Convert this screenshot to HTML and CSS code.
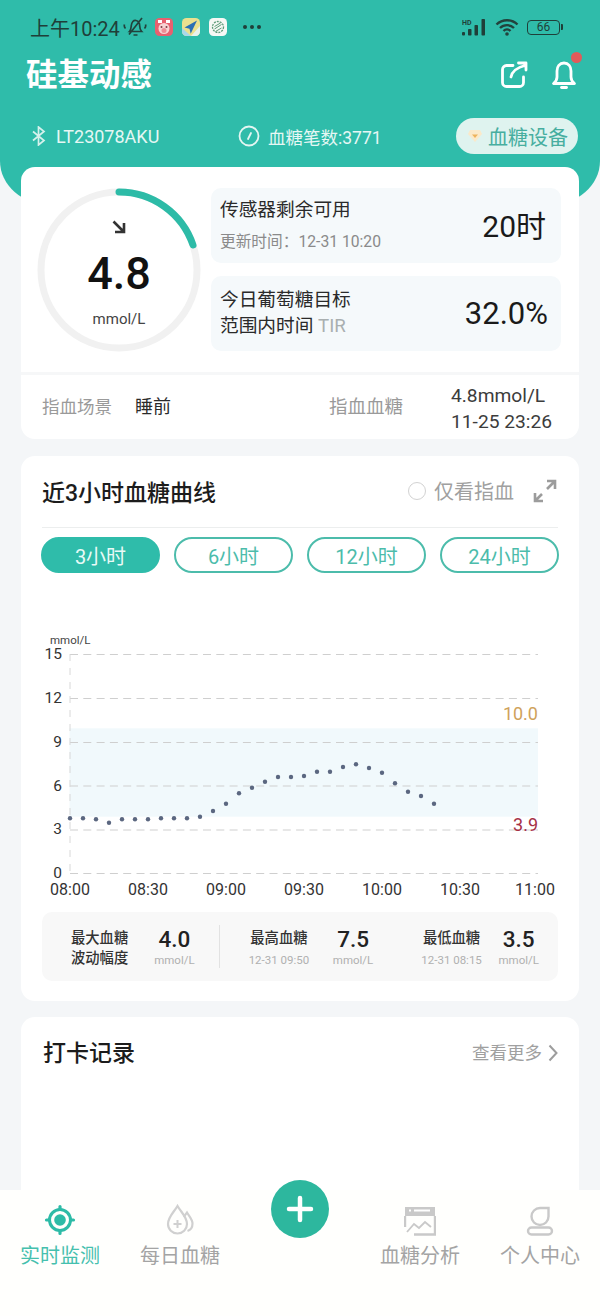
FILE: index.html
```html
<!DOCTYPE html>
<html lang="zh">
<head>
<meta charset="utf-8">
<title>硅基动感</title>
<link rel="stylesheet" href="styles.css">
</head>
<body>
<div class="app">
  <header class="hero">
    <div class="status">
      <div class="status-left">
        <span class="clock">上午10:24</span>
        <svg class="ic-mute" viewBox="0 0 24 22" fill="none" stroke="#22423c" stroke-width="1.700"><path d="M6.500 15.500c1.500-1.500 1.500-3.500 1.800-6C8.700 6 10.500 4 13 4.500c2.800.5 3.700 2.800 3.700 5.500s.6 4 2 5.500H6.500zM10.500 19h4M6 18.500L19 2M1.500 8.500c-.5 1.500 0 3 1 4M22.500 8.500c.5 1.500 0 3-1 4"/></svg>
        <svg class="app-ic" viewBox="0 0 18 18"><rect width="18" height="18" rx="4.500" fill="#e8606f"/><circle cx="9" cy="10.500" r="5.500" fill="#f7d3d3"/><circle cx="9" cy="12.500" r="2.500" fill="#ee8d96"/><path d="M3 2h4v3H3zM11 2h4v3h-4z" fill="#fff"/><circle cx="6.500" cy="9" r="1" fill="#7a3b44"/><circle cx="11.500" cy="9" r="1" fill="#7a3b44"/></svg>
        <svg class="app-ic" viewBox="0 0 18 18"><rect width="18" height="18" rx="4.500" fill="#ebe08f"/><path d="M0 10l9 8H4.500A4.500 4.500 0 0 1 0 13.500z" fill="#a8d8ea"/><path d="M18 8v5.500a4.500 4.500 0 0 1-4.500 4.500H9z" fill="#e8f2ee"/><path d="M15 2.500L2.500 9.500l5 1.200 1.200 5z" fill="#2b6fb4"/></svg>
        <svg class="app-ic" viewBox="0 0 18 18"><rect width="18" height="18" rx="4.500" fill="#f6f8f5"/><circle cx="9" cy="9" r="5.500" fill="none" stroke="#5c9a78" stroke-width="1.300" stroke-dasharray="2 1"/><path d="M5.500 11l7-4.500M5.500 8.500l6-3.500M6.500 13.500l6-3.500" stroke="#5c9a78" stroke-width="1"/></svg>
        <span class="dots"><i></i><i></i><i></i></span>
      </div>
      <div class="status-right">
        <svg class="ic-signal" viewBox="0 0 26 17"><text x="0" y="6" class="hd">HD</text><rect x="0" y="13" width="3" height="3.500" rx="1"/><rect x="6" y="10" width="3.500" height="6.500" rx=".8"/><rect x="12.500" y="6" width="3.500" height="10.500" rx=".8"/><rect x="19.500" y="0" width="3.500" height="16.500" rx=".8"/></svg>
        <svg class="ic-wifi" viewBox="0 0 24 18" fill="none" stroke="#22423c" stroke-width="2.400"><path d="M1.500 6.500a15 15 0 0 1 21 0M5 10a10 10 0 0 1 14 0M8.500 13a5 5 0 0 1 7 0"/><circle cx="12" cy="16" r="1.800" fill="#22423c" stroke="none"/></svg>
        <span class="battery"><span class="batt-body">66</span><span class="batt-tip"></span></span>
      </div>
    </div>
    <div class="brand-row">
      <h1 class="brand">硅基动感</h1>
      <div class="brand-actions">
        <svg class="ic-share" viewBox="0 0 28 28" fill="none" stroke="#fff" stroke-width="2.800" stroke-linecap="round" stroke-linejoin="round"><path d="M13 4.500H6.500a4 4 0 0 0-4 4v13a4 4 0 0 0 4 4h13a4 4 0 0 0 4-4V16"/><path d="M11 16c1-5 4-9 14-11.500M18.500 2H26v7"/></svg>
        <span class="bell-wrap">
          <svg class="ic-bell" viewBox="0 0 26 28" fill="none" stroke="#fff" stroke-width="2.800" stroke-linecap="round" stroke-linejoin="round"><path d="M13 2c-4.500 0-7 3.500-7 8v6c0 3-1.500 5-3.500 6.500h21C21.500 21 20 19 20 16v-6c0-4.500-2.500-8-7-8z"/><path d="M10.500 26.500h5"/></svg>
          <span class="bell-dot"></span>
        </span>
      </div>
    </div>
    <div class="info-row">
      <span class="info-item bt">
        <svg class="ic-bt" viewBox="0 0 14 20" fill="none" stroke="#d6f1ec" stroke-width="1.700"><path d="M1.500 5.500l11 9L7 19V1l5.500 4.500-11 9"/></svg>
        LT23078AKU
      </span>
      <span class="info-item count">
        <svg class="ic-clock" viewBox="0 0 22 22" fill="none" stroke="#e3f6f2" stroke-width="1.800"><circle cx="11" cy="11" r="9.500"/><path d="M10 14l3-6" stroke-linecap="round"/></svg>
        血糖笔数:3771
      </span>
      <span class="device-pill">
        <svg class="ic-gem" viewBox="0 0 14 12"><path d="M2 0h10l2 4-7 8-7-8z" fill="#fbe9c9"/><path d="M4 4.500h6L7 8z" fill="#eeb35c"/></svg>
        血糖设备
      </span>
    </div>
  </header>

  <main class="content">
    <section class="card summary">
      <div class="summary-top">
        <div class="gauge">
          <svg class="gauge-ring" viewBox="0 0 164 164" fill="none">
            <circle cx="82" cy="82" r="78" stroke="#f1f1f1" stroke-width="7"/>
            <path d="M82 4A78 78 0 0 1 156 57" stroke="#2dbba7" stroke-width="7" stroke-linecap="round"/>
          </svg>
          <svg class="gauge-arrow" viewBox="0 0 14 14" fill="none" stroke="#333" stroke-width="2.600"><path d="M1.500 1.500l10 10M12 3v9H3"/></svg>
          <div class="gauge-value">4.8</div>
          <div class="gauge-unit">mmol/L</div>
        </div>
        <div class="stats">
          <div class="stat-box">
            <div class="stat-text">
              <div class="stat-title">传感器剩余可用</div>
              <div class="stat-sub">更新时间：12-31 10:20</div>
            </div>
            <div class="stat-val">20时</div>
          </div>
          <div class="stat-box">
            <div class="stat-text tight">
              <div class="stat-title">今日葡萄糖目标</div>
              <div class="stat-title">范围内时间 <span class="tir">TIR</span></div>
            </div>
            <div class="stat-val wide">32.0%</div>
          </div>
        </div>
      </div>
      <div class="summary-bottom">
        <span class="muted">指血场景</span>
        <span class="scene">睡前</span>
        <span class="muted finger">指血血糖</span>
        <span class="finger-val">4.8mmol/L<br>11-25 23:26</span>
      </div>
    </section>

    <section class="card chart-card">
      <div class="card-head">
        <h2 class="card-title">近3小时血糖曲线</h2>
        <div class="head-right">
          <span class="radio"></span>
          <span class="only">仅看指血</span>
          <svg class="ic-expand" viewBox="0 0 24 24" fill="none" stroke-width="2.600"><path d="M14 2h8v8M22 2l-8 8" stroke="#9c9c9c"/><path d="M2 14v8h8M2 22l7-7" stroke="#9c9c9c"/></svg>
        </div>
      </div>
      <div class="tabs">
        <span class="tab on">3小时</span>
        <span class="tab">6小时</span>
        <span class="tab">12小时</span>
        <span class="tab">24小时</span>
      </div>
      <svg class="chart" viewBox="0 0 538 280">
        <rect x="28.500" y="99.300" width="468.500" height="88.400" fill="#f1f9fc"/>
        <g class="grid">
          <path d="M29 25.500H497M29 69.500H497M29 113.500H497M29 157H497M29 201H497M29 244.500H497"/>
        </g>
        <path class="axis" d="M29 25V244"/>
        <text x="9" y="15" class="unit">mmol/L</text>
        <g class="ylab">
          <text x="21" y="30">15</text><text x="21" y="74">12</text><text x="21" y="118">9</text>
          <text x="21" y="162">6</text><text x="21" y="205">3</text><text x="21" y="249">0</text>
        </g>
        <text x="497" y="91" class="hi">10.0</text>
        <text x="497" y="202" class="lo">3.9</text>
        <g class="pts">
          <circle cx="29" cy="189.300" r="2.200"/><circle cx="42" cy="189.300" r="2.200"/><circle cx="55" cy="190.300" r="2.200"/><circle cx="68" cy="193.700" r="2.200"/><circle cx="81" cy="190.300" r="2.200"/><circle cx="94" cy="190.300" r="2.200"/><circle cx="107" cy="190.300" r="2.200"/><circle cx="120" cy="189.300" r="2.200"/><circle cx="133" cy="189.300" r="2.200"/><circle cx="146" cy="189.300" r="2.200"/><circle cx="159" cy="187.700" r="2.200"/><circle cx="172" cy="182" r="2.200"/><circle cx="185" cy="174.700" r="2.200"/><circle cx="198" cy="164.300" r="2.200"/><circle cx="211" cy="158.700" r="2.200"/><circle cx="224" cy="152.700" r="2.200"/><circle cx="237" cy="148" r="2.200"/><circle cx="250" cy="148" r="2.200"/><circle cx="263" cy="147" r="2.200"/><circle cx="276" cy="142.700" r="2.200"/><circle cx="289" cy="142.700" r="2.200"/><circle cx="302" cy="138" r="2.200"/><circle cx="315" cy="135.300" r="2.200"/><circle cx="328" cy="139" r="2.200"/><circle cx="341" cy="143.700" r="2.200"/><circle cx="354" cy="154.300" r="2.200"/><circle cx="367" cy="162.700" r="2.200"/><circle cx="380" cy="167" r="2.200"/><circle cx="393" cy="174.700" r="2.200"/>
        </g>
        <g class="xlab">
          <text x="29" y="266">08:00</text><text x="107" y="266">08:30</text><text x="185" y="266">09:00</text><text x="263" y="266">09:30</text><text x="341" y="266">10:00</text><text x="419" y="266">10:30</text><text x="494" y="266">11:00</text>
        </g>
      </svg>
      <div class="metrics">
        <div class="metric first">
          <div class="m-label"><b>最大血糖</b><b>波动幅度</b></div>
          <div class="m-val"><strong>4.0</strong><small>mmol/L</small></div>
        </div>
        <span class="m-divider"></span>
        <div class="metric second">
          <div class="m-label dated"><b>最高血糖</b><small>12-31 09:50</small></div>
          <div class="m-val"><strong>7.5</strong><small>mmol/L</small></div>
        </div>
        <div class="metric third">
          <div class="m-label dated"><b>最低血糖</b><small>12-31 08:15</small></div>
          <div class="m-val"><strong>3.5</strong><small>mmol/L</small></div>
        </div>
      </div>
    </section>

    <section class="card records">
      <h2 class="card-title big">打卡记录</h2>
      <span class="more">查看更多
        <svg class="ic-chev" viewBox="0 0 10 18" fill="none" stroke="#9d9d9d" stroke-width="2"><path d="M1.500 1.500L8.500 9l-7 7.500"/></svg>
      </span>
    </section>
  </main>

  <nav class="tabbar">
    <a class="nav-item active">
      <svg class="nav-ic" viewBox="0 0 32 32" fill="none" stroke="#2dbba7" stroke-width="3"><circle cx="16" cy="16" r="10.500"/><circle cx="16" cy="16" r="5.800" fill="#2dbba7" stroke="none"/><path d="M16 2.500v3M16 26.500v3M2.500 16h3M26.500 16h3" stroke-linecap="round" stroke-width="3.200"/></svg>
      实时监测
    </a>
    <a class="nav-item">
      <svg class="nav-ic" viewBox="0 0 32 32" fill="none" stroke="#d0d0d0" stroke-width="2.200"><path d="M13.500 2C10 8 4 13 4 20a9.500 9.500 0 0 0 19 0C23 13 17 8 13.500 2z"/><path d="M20 13c1-2 2-3 3-4.500 2.500 4 5.500 7 5.500 11 0 3.500-2 6.500-5 7.500"/><path d="M13.500 16v8M9.500 20h8" stroke-width="2"/></svg>
      每日血糖
    </a>
    <div class="plus-slot">
      <button class="plus" type="button" aria-label="添加"><svg viewBox="0 0 28 28" fill="none" stroke="#fff" stroke-width="4.500" stroke-linecap="round"><path d="M14 3v22M3 14h22"/></svg></button>
    </div>
    <a class="nav-item">
      <svg class="nav-ic" viewBox="0 0 32 32" fill="none"><path d="M1 3h30v9H1z" fill="#c9c9c9"/><path d="M1 12v11M31 12v18.500H10" stroke="#c9c9c9" stroke-width="2.400"/><path d="M5 6.500h2M10 6.500h16" stroke="#fff" stroke-width="2"/><path d="M3 28l7-8 5 4 6-6 6 5" stroke="#c9c9c9" stroke-width="1.800"/></svg>
      血糖分析
    </a>
    <a class="nav-item">
      <svg class="nav-ic" viewBox="0 0 32 32" fill="none" stroke="#c9c9c9" stroke-width="2.400"><path d="M24.500 4H16a8.500 8.500 0 0 0 0 17 8.500 8.500 0 0 0 8.500-8.500z"/><rect x="4" y="23.500" width="24" height="7" rx="3.500"/></svg>
      个人中心
    </a>
  </nav>
</div>
</body>
</html>
```
FILE: styles.css
```css
* { box-sizing: border-box; }
html, body { margin: 0; padding: 0; }
body {
  width: 600px;
  height: 1316px;
  overflow: hidden;
  background: #f4f6f8;
  font-family: "Roboto", "Noto Sans CJK SC", "Noto Sans", sans-serif;
  color: #222;
}
.app { position: relative; width: 600px; height: 1316px; overflow: hidden; }
h1, h2 { margin: 0; font-weight: 500; }

/* header */
.hero {
  height: 205px;
  background: #2fbcaa;
  border-radius: 0 0 50px 50px / 0 0 44px 44px;
  padding: 13px 22px 0 30px;
  color: #fff;
}
.status { display: flex; justify-content: space-between; align-items: center; height: 28px; }
.status-left { display: flex; align-items: center; }
.clock { font-size: 20px; color: #1f3f39; margin-right: 3px; }
.ic-mute { width: 24px; height: 22px; margin-right: 8px; }
.app-ic { width: 18px; height: 18px; margin-right: 9px; }
.dots { display: flex; gap: 3px; margin-left: 7px; }
.dots i { width: 4px; height: 4px; background: #1f3f39; border-radius: 50%; }
.status-right { display: flex; align-items: center; gap: 7px; margin-right: 15px; }
.ic-signal { width: 26px; height: 17px; fill: #1f3f39; }
.hd { font-size: 7px; font-weight: 700; font-family: "Roboto", sans-serif; }
.ic-wifi { width: 24px; height: 18px; }
.battery { display: flex; align-items: center; margin-left: 1px; }
.batt-body {
  width: 33px; height: 15px;
  border: 1.300px solid #1f3f39; border-radius: 4px;
  font-size: 12px; line-height: 12px; text-align: center; color: #1f3f39;
}
.batt-tip { width: 2px; height: 6px; background: #1f3f39; margin-left: 1px; border-radius: 0 1px 1px 0; }

.brand-row { display: flex; justify-content: space-between; align-items: center; margin-top: 9px; height: 50px; }
.brand { font-size: 31.500px; line-height: 50px; margin-left: -4px; margin-top: 2px; font-weight: 700; }
.brand-actions { display: flex; align-items: center; gap: 23px; margin-right: 1px; }
.ic-share { width: 28px; height: 28px; }
.ic-bell { width: 26px; height: 28px; display: block; }
.bell-wrap { position: relative; display: block; }
.bell-dot { position: absolute; top: -9px; right: -5px; width: 11px; height: 11px; border-radius: 50%; background: #e25a5a; }

.info-row { display: flex; align-items: center; margin-top: 18px; font-size: 18px; height: 36px; color: #e6f7f4; }
.info-item { display: flex; align-items: center; }
.bt { width: 208px; gap: 10px; }
.ic-bt { width: 15px; height: 20px; margin-left: 1px; }
.count { width: 218px; gap: 8px; font-size: 17.500px; }
.ic-clock { width: 22px; height: 22px; }
.device-pill {
  display: flex; align-items: center; gap: 6px;
  width: 122px; height: 36px;
  background: #dff3ef; color: #47ae9f;
  border-radius: 18px; font-size: 20px; padding-left: 12px;
}
.ic-gem { width: 14px; height: 12px; }

/* cards */
.content { padding: 0 21px; margin-top: -38px; position: relative; display: flex; flex-direction: column; gap: 16px; }
.card { background: #fff; border-radius: 14px; }

.summary { height: 272px; }
.summary-top { display: flex; height: 205px; padding: 21px 18px 0 16px; }
.gauge { position: relative; width: 164px; height: 164px; flex: none; display: flex; flex-direction: column; align-items: center; }
.gauge-ring { position: absolute; inset: 0; width: 164px; height: 164px; }
.gauge-arrow { width: 14px; height: 14px; margin-top: 32px; }
.gauge-value { font-size: 45px; line-height: 52px; font-weight: 500; color: #111; margin-top: 14px; }
.gauge-unit { font-size: 15px; line-height: 18px; color: #444; margin-top: 10px; }
.stats { flex: 1; margin-left: 10px; display: flex; flex-direction: column; gap: 13px; }
.stat-box {
  height: 75px; background: #f5f9fb; border-radius: 10px;
  display: flex; justify-content: space-between; align-items: center;
  padding: 0 13px 0 9px;
}
.stat-text { display: flex; flex-direction: column; gap: 8px; }
.stat-text.tight { gap: 1px; }
.stat-title { font-size: 18.700px; line-height: 25px; color: #2a2a2a; }
.stat-sub { font-size: 15.700px; line-height: 22px; color: #8a8a8a; }
.stat-val { font-size: 30px; color: #1a1a1a; margin: 0 2px 4px 0; }
.stat-val.wide { margin: 0; font-size: 31px; }
.tir { color: #a9afb0; }

.summary-bottom {
  height: 67px; border-top: 3px solid #f6f7f8;
  display: flex; align-items: center;
  padding: 0 0 4px 21px; font-size: 18px;
}
.muted { color: #9a9a9a; font-size: 17.500px; }
.finger { font-size: 18.500px; }
.scene { color: #2a2a2a; margin-left: 23px; width: 194px; }
.finger-val { margin: 8px 0 0 48px; font-size: 19.200px; line-height: 26px; color: #3c3c3c; white-space: nowrap; }

.chart-card { height: 545px; padding: 0 21px; margin-top: 1px; }
.card-head {
  display: flex; justify-content: space-between; align-items: center;
  height: 72px; padding-bottom: 2px; border-bottom: 1px solid #eceeee;
}
.card-title { font-size: 23px; color: #1c1c1c; font-weight: 500; }
.head-right { display: flex; align-items: center; margin-right: 1px; }
.radio { width: 18px; height: 18px; border: 1.500px solid #d2d2d2; border-radius: 50%; margin-right: 8px; }
.only { font-size: 20px; color: #a0a0a0; margin-right: 19px; }
.ic-expand { width: 24px; height: 24px; }
.tabs { display: flex; justify-content: space-between; margin: 9px -1px 0; }
.tab {
  width: 119px; height: 36px; border: 2px solid #4cbcab; border-radius: 18px;
  color: #4cbcab; font-size: 20px; display: flex; align-items: center; justify-content: center;
}
.tab.on { background: #2fbcaa; color: #e9faf7; border-color: #2fbcaa; }

.chart { display: block; width: 538px; height: 280px; margin: 56px 0 0 -1.500px; }
.grid path { stroke: #cfcfcf; stroke-width: 1; stroke-dasharray: 8 5.300; fill: none; }
.axis { stroke: #d8d8d8; stroke-width: 1; stroke-dasharray: 7 7; fill: none; }
.chart text { font-family: "Roboto", "Noto Sans", sans-serif; }
.unit { font-size: 11.500px; fill: #444; }
.ylab text { font-size: 15.500px; fill: #333; text-anchor: end; }
.hi, .lo { font-size: 18px; text-anchor: end; }
.hi { fill: #cfa25a; }
.lo { fill: #a63046; }
.pts circle { fill: #5b6780; }
.xlab text { font-size: 16px; fill: #333; text-anchor: middle; }

.metrics {
  height: 69px; margin-top: 3px; background: #f8f8f8; border-radius: 10px;
  display: flex; align-items: flex-start; padding: 17px 19px 0 29px;
}
.metric { display: flex; align-items: flex-start; justify-content: space-between; }
.first { width: 124px; }
.m-divider { width: 1px; height: 43px; background: #e2e2e2; margin: -4px 29px 0 24px; }
.second { width: 125px; }
.third { width: 118px; margin-left: 48px; }
.m-label { display: flex; flex-direction: column; align-items: center; gap: 2px; }
.m-label.dated { gap: 4px; }
.m-label b { font-size: 14.300px; line-height: 18px; font-weight: 500; color: #333; white-space: nowrap; }
.m-label small { font-size: 11.500px; line-height: 18px; color: #b0b0b0; white-space: nowrap; }
.m-val { display: flex; flex-direction: column; align-items: center; }
.m-val strong { font-size: 22.500px; line-height: 20px; font-weight: 500; color: #222; }
.m-val small { font-size: 11.500px; line-height: 18px; color: #b0b0b0; margin-top: 2px; }

.records { height: 220px; padding: 17px 21px 0 22px; display: flex; justify-content: space-between; align-items: flex-start; }
.more { display: flex; align-items: center; gap: 6px; color: #a0a0a0; font-size: 17.500px; line-height: 30px; margin-top: 4px; }
.ic-chev { width: 10px; height: 18px; }

/* tab bar */
.tabbar {
  position: absolute; left: 0; right: 0; top: 1190px; height: 126px;
  background: #fffffd; display: flex; padding-top: 14px;
}
.nav-item {
  width: 120px; display: flex; flex-direction: column; align-items: center; gap: 5px;
  font-size: 20px; line-height: 30px; color: #a4a4a4; height: 67px;
}
.nav-item.active { color: #45c0ae; }
.nav-ic { width: 32px; height: 32px; flex: none; }
.plus-slot { width: 120px; position: relative; }
.plus {
  position: absolute; left: 31px; top: -24px; width: 58px; height: 58px;
  border: 0; border-radius: 50%; background: #2db79e; padding: 15px;
  display: flex;
}
.plus svg { width: 28px; height: 28px; }
```
